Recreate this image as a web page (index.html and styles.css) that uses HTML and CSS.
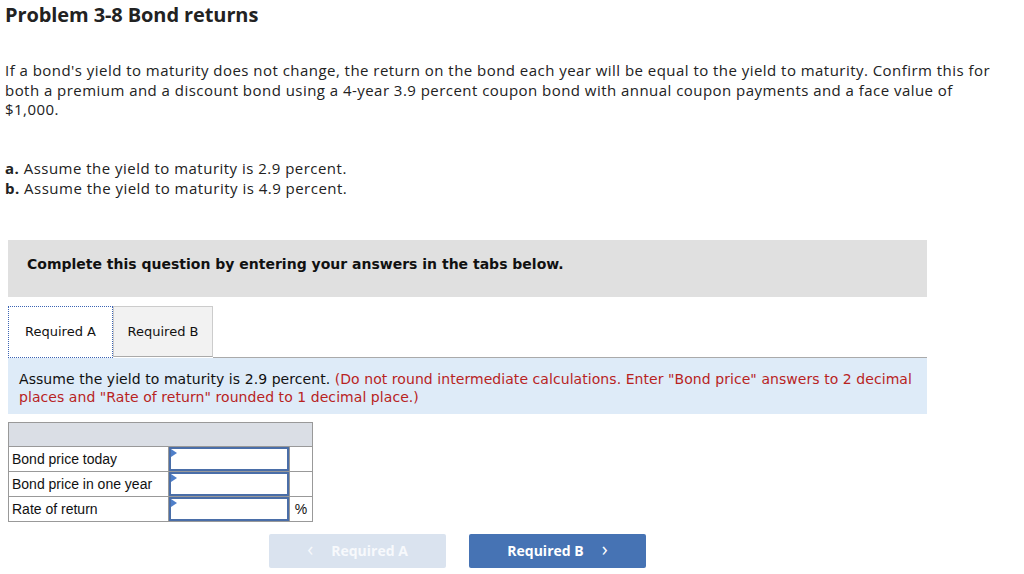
FILE: index.html
```html
<!DOCTYPE html>
<html>
<head>
<meta charset="utf-8">
<link rel="stylesheet" href="styles.css">
</head>
<body>
<h1 class="title">Problem 3-8 Bond returns</h1>
<p class="intro">If a bond's yield to maturity does not change, the return on the bond each year will be equal to the yield to maturity. Confirm this for both a premium and a discount bond using a 4-year 3.9 percent coupon bond with annual coupon payments and a face value of $1,000.</p>
<div class="parts">
  <div><b>a.</b> Assume the yield to maturity is 2.9 percent.</div>
  <div><b>b.</b> Assume the yield to maturity is 4.9 percent.</div>
</div>
<div class="notice">Complete this question by entering your answers in the tabs below.</div>
<div class="tabs">
  <div class="tab active">Required A</div>
  <div class="tab">Required B</div>
  <div class="tab-rest"></div>
</div>
<div class="info">Assume the yield to maturity is 2.9 percent. <span class="hint">(Do not round intermediate calculations. Enter "Bond price" answers to 2 decimal places and "Rate of return" rounded to 1 decimal place.)</span></div>
<table class="grid">
  <tr class="head"><td colspan="3"></td></tr>
  <tr><td class="label">Bond price today</td><td class="cell"><div class="input"></div></td><td class="unit"></td></tr>
  <tr><td class="label">Bond price in one year</td><td class="cell"><div class="input"></div></td><td class="unit"></td></tr>
  <tr><td class="label">Rate of return</td><td class="cell"><div class="input"></div></td><td class="unit">%</td></tr>
</table>
<div class="nav">
  <button class="btn prev"><span class="chev">&lsaquo;</span> Required A</button>
  <button class="btn next">Required B <span class="chev">&rsaquo;</span></button>
</div>
</body>
</html>
```
FILE: styles.css
```css
html, body { margin: 0; padding: 0; background: #fff; }
body { width: 1024px; height: 574px; overflow: hidden; font-family: "Open Sans", Lato, sans-serif; color: #222; }
.title { margin: 0; padding: 4px 0 0 5px; font-size: 20px; font-weight: 700; line-height: 22px; letter-spacing: -0.1px; color: #222; }
.intro { margin: 35px 0 0 5px; width: 1000px; font-size: 15px; line-height: 19.5px; letter-spacing: 0.46px; color: #222; }
.parts { margin: 38px 0 0 5px; font-size: 15px; line-height: 20px; letter-spacing: 0.48px; }
.parts b { font-weight: 700; }
.notice { margin: 42px 0 0 8px; width: 919px; height: 57px; box-sizing: border-box; background: #e0e0e0; padding: 16px 0 0 19px; font-family: "DejaVu Sans", Verdana, sans-serif; font-weight: 700; font-size: 14px; color: #111; line-height: 17px; }
.tabs { display: flex; margin: 9px 0 0 8px; width: 919px; height: 52px; }
.tab { box-sizing: border-box; height: 51px; display: flex; align-items: center; justify-content: center; font-family: "DejaVu Sans", Verdana, sans-serif; font-size: 13px; color: #111; border: 1px solid #ccc; border-bottom: 1px solid #aaa; background: #f2f2f2; width: 100px; }
.tab.active { width: 105px; background: #fff; border: 1px dotted #3c64b4; border-bottom: 1px dotted #3c64b4; height: 52px; }
.tab-rest { flex: 1; border-bottom: 1px solid #aaa; height: 51px; }
.info { margin: 0 0 0 8px; width: 919px; box-sizing: border-box; background: #deebf8; padding: 12px 10px 10px 11px; font-family: "DejaVu Sans", Verdana, sans-serif; font-size: 14px; line-height: 18px; letter-spacing: 0.06px; color: #111; height: 56px; }
.hint { color: #b8231f; }
.grid { margin: 8px 0 0 8px; border-collapse: collapse; font-family: "Liberation Sans", Arial, sans-serif; font-size: 14px; color: #111; }
.grid td { border: 1px solid #999; padding: 0; height: 24px; }
.grid .head td { background: #dadee5; height: 23px; }
.grid .label { width: 156px; padding-left: 3px; }
.grid .cell { width: 120px; }
.grid .unit { width: 22px; text-align: center; }
.input { position: relative; box-sizing: border-box; height: 24px; border: 2px solid #4a6ea8; background: #fff; }
.input::before { content: ""; position: absolute; left: 0; top: 0; border-left: 6px solid #4f7fc9; border-top: 4px solid transparent; border-bottom: 4px solid transparent; }
.nav { display: flex; gap: 23px; margin: 12px 0 0 269px; }
.btn { width: 177px; height: 34px; border: none; border-radius: 2px; font-family: "Open Sans", Lato, sans-serif; font-weight: 700; font-size: 14px; color: #fff; display: flex; align-items: center; justify-content: center; gap: 6px; padding: 0; }
.btn .chev { font-weight: 400; font-size: 20px; line-height: 1; margin-top: -3px; }
.btn.prev { background: #dae3ef; color: #f7f9fc; }
.btn.prev .chev { margin-right: 12px; }
.btn.next { background: #4673b4; }
.btn.next .chev { margin-left: 12px; }
```
